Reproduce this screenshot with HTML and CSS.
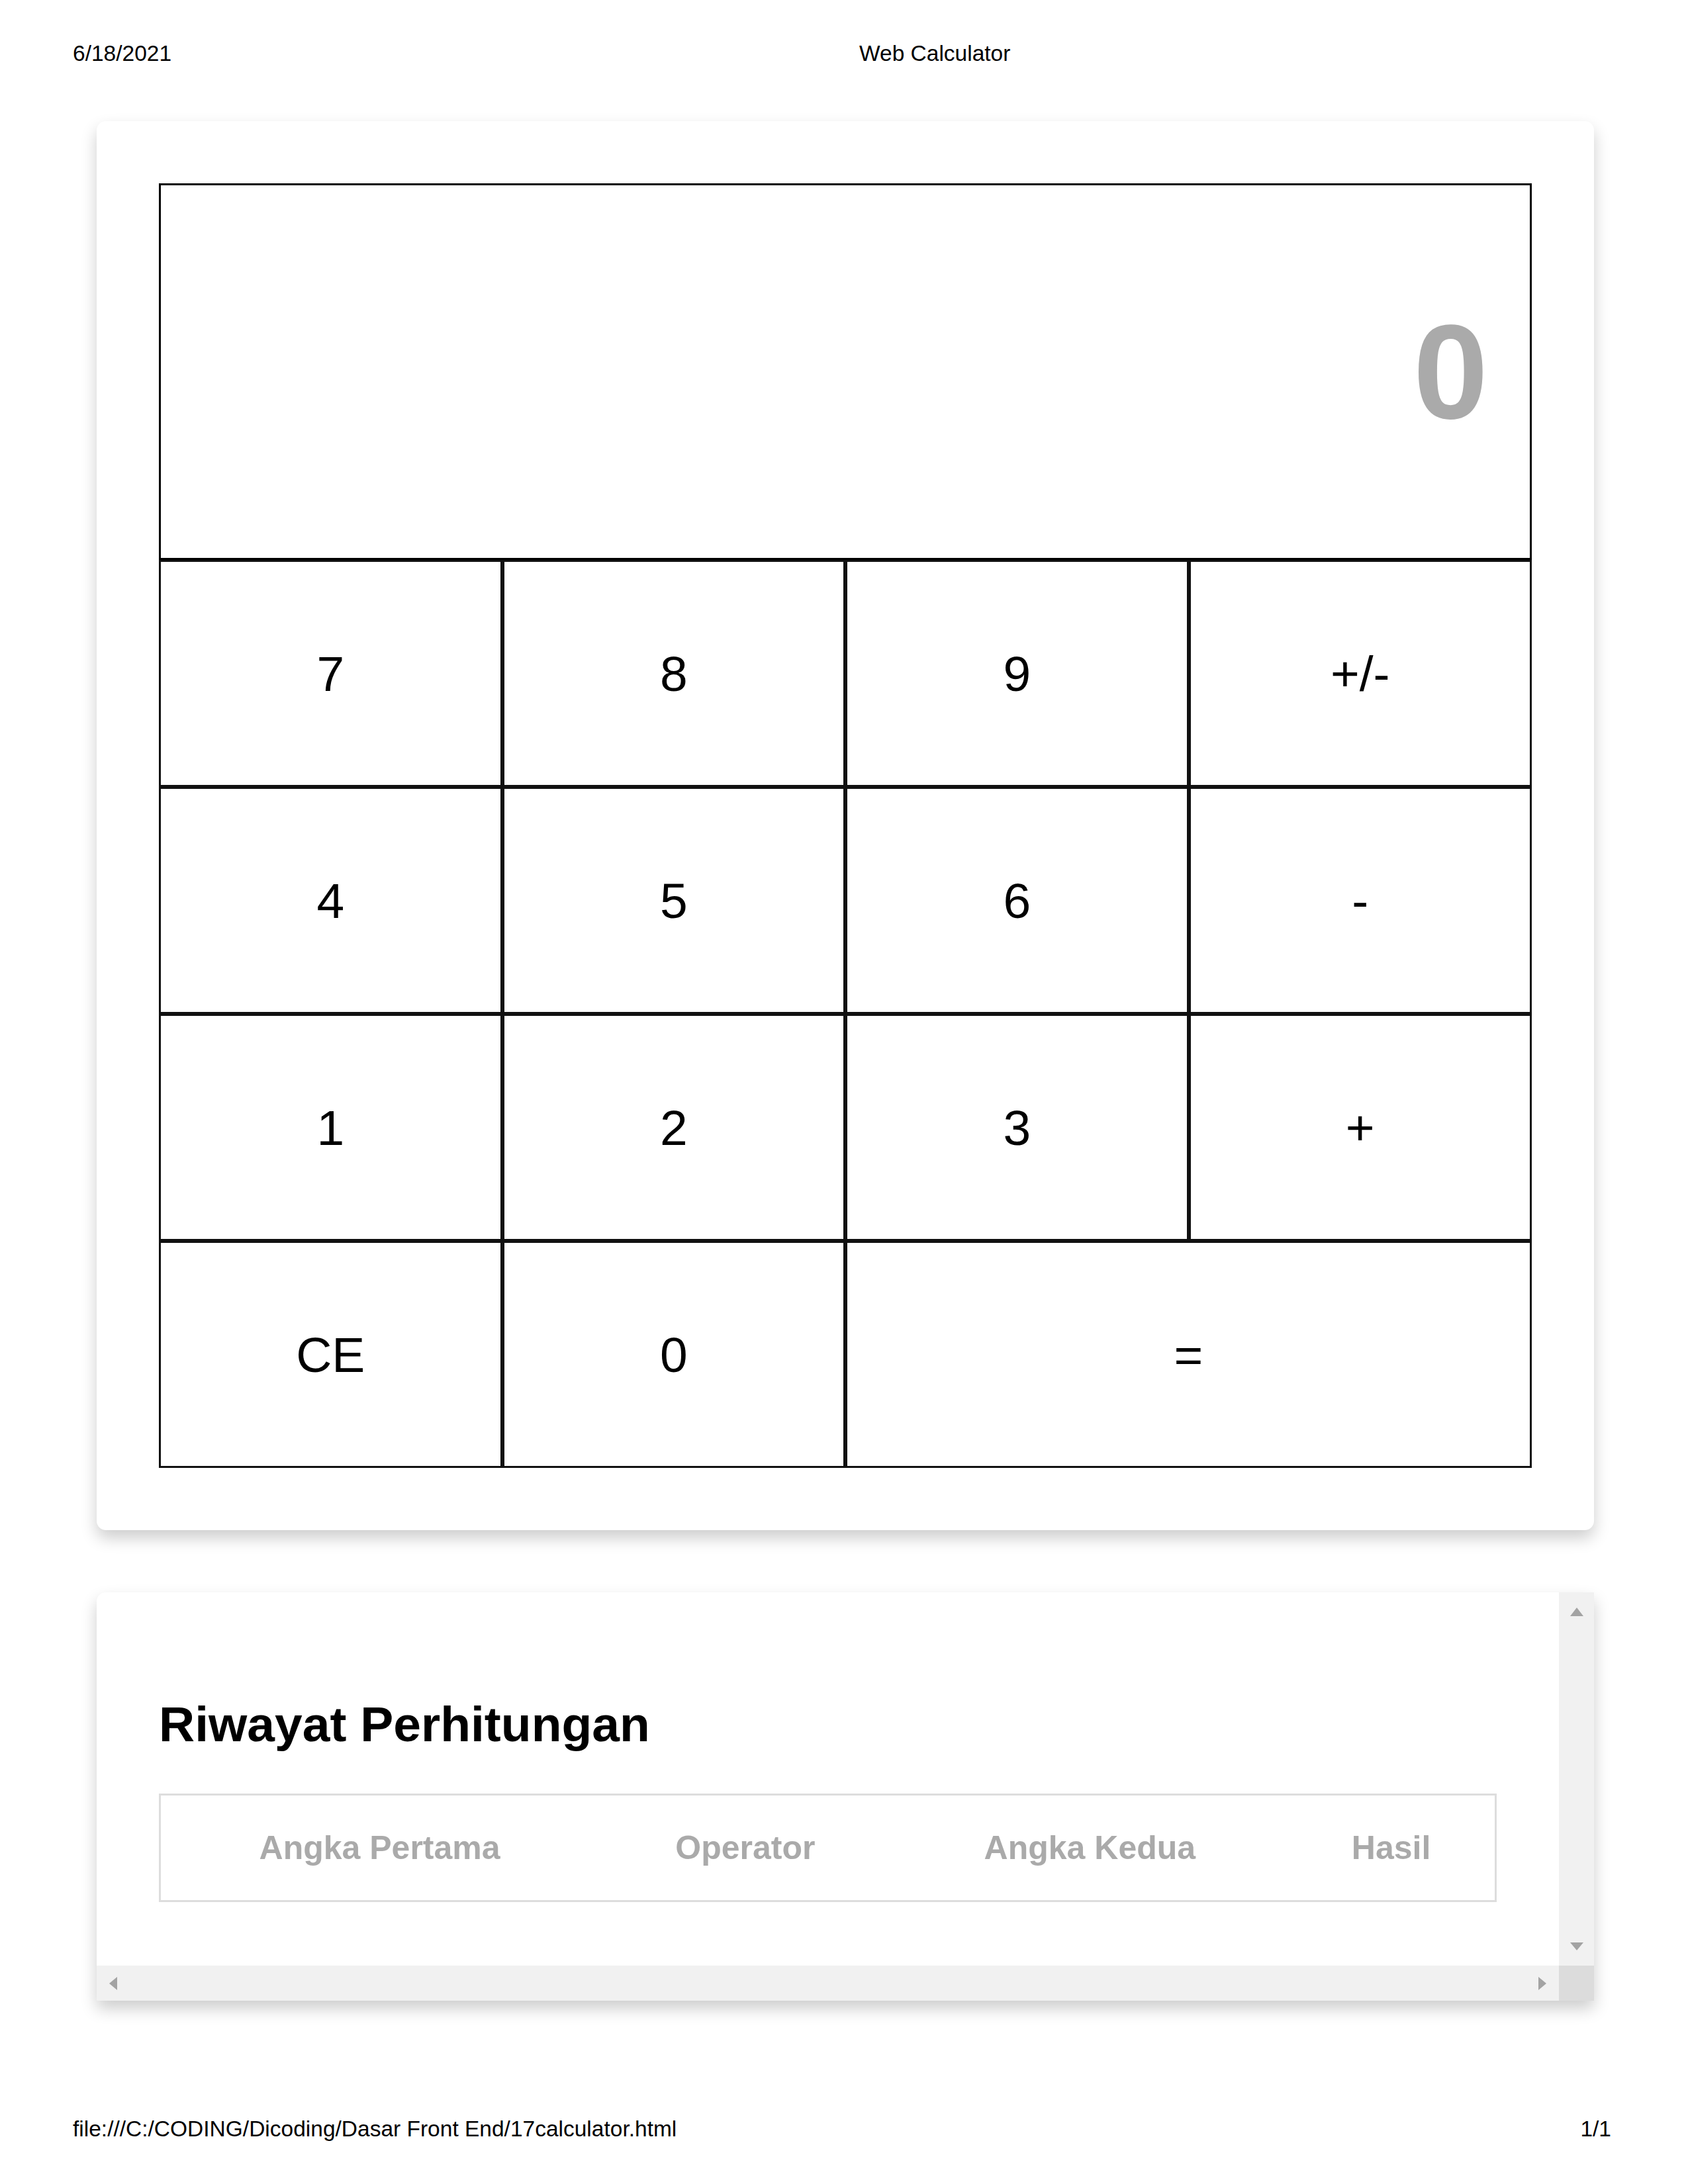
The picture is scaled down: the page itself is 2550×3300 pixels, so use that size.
FILE: index.html
```html
<!DOCTYPE html>
<html lang="id">
<head>
<meta charset="utf-8">
<title>Web Calculator</title>
<link rel="stylesheet" href="styles.css">
</head>
<body>
<header class="print-header">
  <span class="print-date">6/18/2021</span>
  <span class="print-title">Web Calculator</span>
</header>
<main class="page">
  <section class="card calculator">
    <div class="calc-grid">
      <div class="display">0</div>
      <div class="key">7</div>
      <div class="key">8</div>
      <div class="key">9</div>
      <div class="key">+/-</div>
      <div class="key">4</div>
      <div class="key">5</div>
      <div class="key">6</div>
      <div class="key">-</div>
      <div class="key">1</div>
      <div class="key">2</div>
      <div class="key">3</div>
      <div class="key">+</div>
      <div class="key">CE</div>
      <div class="key">0</div>
      <div class="key key-wide">=</div>
    </div>
  </section>
  <section class="card history">
    <div class="history-content">
      <h2 class="history-title">Riwayat Perhitungan</h2>
      <table class="history-table">
        <thead>
          <tr>
            <th>Angka Pertama</th>
            <th>Operator</th>
            <th>Angka Kedua</th>
            <th>Hasil</th>
          </tr>
        </thead>
      </table>
    </div>
    <div class="vscroll">
      <span class="arrow arrow-up"></span>
      <span class="arrow arrow-down"></span>
    </div>
    <div class="hscroll">
      <span class="arrow arrow-left"></span>
      <span class="arrow arrow-right"></span>
    </div>
    <div class="scroll-corner"></div>
  </section>
</main>
<footer class="print-footer">
  <span>file:///C:/CODING/Dicoding/Dasar Front End/17calculator.html</span>
  <span>1/1</span>
</footer>
</body>
</html>
```
FILE: styles.css
```css
html, body {
  margin: 0;
  padding: 0;
  background: #ffffff;
}

body {
  width: 2550px;
  height: 3300px;
  font-family: "Liberation Sans", Arial, sans-serif;
  color: #000;
}

.print-header {
  display: grid;
  grid-template-columns: 1188px auto;
  padding: 62px 0 0 110px;
  font-size: 33.5px;
  line-height: 38px;
}

.page {
  display: flex;
  flex-direction: column;
  gap: 94px;
  padding: 83px 0 0 146px;
}

.card {
  width: 2262px;
  box-sizing: border-box;
  background: #ffffff;
  box-shadow: 0 12px 25px 0 rgba(0, 0, 0, 0.2);
}

.calculator {
  padding: 94px;
  border-radius: 14px;
}

.calc-grid {
  display: grid;
  grid-template-columns: repeat(4, 1fr);
  grid-template-rows: 569px repeat(4, 343px);
}

.display {
  grid-column: 1 / span 4;
  display: flex;
  align-items: center;
  justify-content: flex-end;
  padding-right: 63px;
  border: 3px solid #000;
  font-size: 203px;
  font-weight: bold;
  color: #aaaaaa;
}

.key {
  display: flex;
  align-items: center;
  justify-content: center;
  border: 3px solid #111;
  font-size: 75px;
}

.key-wide {
  grid-column: span 2;
}

.history {
  display: grid;
  grid-template-columns: 2209px 53px;
  grid-template-rows: 564px 53px;
  border-radius: 14px 0 0 0;
  overflow: hidden;
}

.history-content {
  padding: 94px;
  overflow: hidden;
}

.history-title {
  margin: 62px 0;
  font-size: 75px;
  font-weight: bold;
  line-height: 86px;
}

.history-table {
  width: 100%;
  border: 3px solid #dddddd;
  border-spacing: 0;
}

.history-table th {
  padding: 50px;
  font-size: 50px;
  font-weight: bold;
  color: #aaaaaa;
}

.vscroll {
  display: flex;
  flex-direction: column;
  justify-content: space-between;
  align-items: center;
  padding: 23px 0;
  background: #f1f1f1;
}

.hscroll {
  display: flex;
  justify-content: space-between;
  align-items: center;
  padding: 0 19px;
  background: #f1f1f1;
}

.scroll-corner {
  background: #dcdcdc;
}

.arrow {
  display: block;
  width: 0;
  height: 0;
}

.arrow-up {
  border-left: 10.5px solid transparent;
  border-right: 10.5px solid transparent;
  border-bottom: 13px solid #a3a3a3;
}

.arrow-down {
  border-left: 10.5px solid transparent;
  border-right: 10.5px solid transparent;
  border-top: 12px solid #a3a3a3;
}

.arrow-left {
  border-top: 10.5px solid transparent;
  border-bottom: 10.5px solid transparent;
  border-right: 12px solid #a3a3a3;
}

.arrow-right {
  border-top: 10.5px solid transparent;
  border-bottom: 10.5px solid transparent;
  border-left: 12px solid #a3a3a3;
}

.print-footer {
  display: flex;
  justify-content: space-between;
  padding: 175px 116px 0 110px;
  font-size: 33.5px;
  line-height: 38px;
}
```
